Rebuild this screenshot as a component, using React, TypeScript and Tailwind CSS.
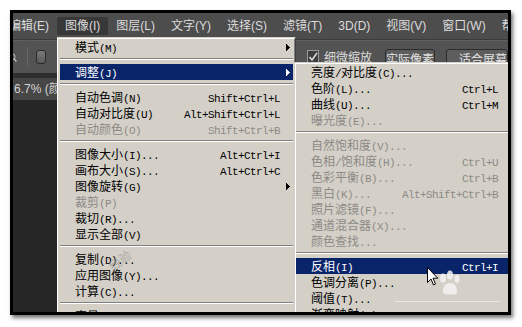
import React from "react";

const CJK_RE = /([\u2E80-\u9FFF\u3000-\u303F\uFF00-\uFFEF]+)/;

function MenuText({ s }: { s: string }) {
  const parts = s.split(CJK_RE).filter((p) => p.length > 0);
  return (
    <>
      {parts.map((p, i) =>
        CJK_RE.test(p) ? (
          <span key={i} className="font-['Noto_Sans_CJK_SC',sans-serif] text-[12px]">
            {p}
          </span>
        ) : (
          <span key={i} className="font-['Liberation_Mono',monospace] text-[11px] tracking-[-0.6px]">
            {p}
          </span>
        )
      )}
    </>
  );
}

type Row = { t: string; k?: string; d?: boolean; h?: boolean; a?: boolean };
type Entry = Row | null;

function Arrow({ white }: { white?: boolean }) {
  const c = white ? "#ffffff" : "#000000";
  return (
    <svg width="4" height="7" viewBox="0 0 4 7" shapeRendering="crispEdges">
      <rect x="0" y="0" width="1" height="7" fill={c} />
      <rect x="1" y="1" width="1" height="5" fill={c} />
      <rect x="2" y="2" width="1" height="3" fill={c} />
      <rect x="3" y="3" width="1" height="1" fill={c} />
    </svg>
  );
}

function MenuRow({ r }: { r: Row }) {
  const color = r.h ? "bg-[#0a246a] text-white" : r.d ? "text-[#8c8a86]" : "text-black";
  return (
    <div className={`flex items-center h-[16px] leading-[16px] pl-[15px] pr-[3px] whitespace-nowrap ${color}`}>
      <div className="flex-1">
        <MenuText s={r.t} />
      </div>
      {r.k ? (
        <div>
          <MenuText s={r.k} />
        </div>
      ) : null}
      <div className="w-[10px] flex justify-end items-center">{r.a ? <Arrow white={r.h} /> : null}</div>
    </div>
  );
}

function Separator() {
  return (
    <div className="h-[9px] pt-[3px]">
      <div className="h-px bg-[#808080]" />
      <div className="h-px bg-white" />
    </div>
  );
}

function MenuList({ entries }: { entries: Entry[] }) {
  return (
    <>
      {entries.map((e, i) => (e ? <MenuRow key={i} r={e} /> : <Separator key={i} />))}
    </>
  );
}

const mainEntries: Entry[] = [
  { t: "模式(M)", a: true },
  null,
  { t: "调整(J)", a: true, h: true },
  null,
  { t: "自动色调(N)", k: "Shift+Ctrl+L" },
  { t: "自动对比度(U)", k: "Alt+Shift+Ctrl+L" },
  { t: "自动颜色(O)", k: "Shift+Ctrl+B", d: true },
  null,
  { t: "图像大小(I)...", k: "Alt+Ctrl+I" },
  { t: "画布大小(S)...", k: "Alt+Ctrl+C" },
  { t: "图像旋转(G)", a: true },
  { t: "裁剪(P)", d: true },
  { t: "裁切(R)..." },
  { t: "显示全部(V)" },
  null,
  { t: "复制(D)..." },
  { t: "应用图像(Y)..." },
  { t: "计算(C)..." },
  null,
  { t: "变量(B)", a: true },
  { t: "应用数据组(L)...", d: true },
];

const subEntries: Entry[] = [
  { t: "亮度/对比度(C)..." },
  { t: "色阶(L)...", k: "Ctrl+L" },
  { t: "曲线(U)...", k: "Ctrl+M" },
  { t: "曝光度(E)...", d: true },
  null,
  { t: "自然饱和度(V)...", d: true },
  { t: "色相/饱和度(H)...", k: "Ctrl+U", d: true },
  { t: "色彩平衡(B)...", k: "Ctrl+B", d: true },
  { t: "黑白(K)...", k: "Alt+Shift+Ctrl+B", d: true },
  { t: "照片滤镜(F)...", d: true },
  { t: "通道混合器(X)...", d: true },
  { t: "颜色查找...", d: true },
  null,
  { t: "反相(I)", k: "Ctrl+I", h: true },
  { t: "色调分离(P)..." },
  { t: "阈值(T)..." },
  { t: "渐变映射(G)..." },
  { t: "可选颜色(S)..." },
];

const barItems = ["编辑(E)", "图像(I)", "图层(L)", "文字(Y)", "选择(S)", "滤镜(T)", "3D(D)", "视图(V)", "窗口(W)", "帮助(H)"];

function MenuBar() {
  return (
    <div className="h-[27px] shrink-0 bg-[#4d4d4d] border-b border-[#3a3a3a] overflow-hidden">
      <div className="flex pt-[4px] ml-[-12px] whitespace-nowrap">
        {barItems.map((m, i) => (
          <div
            key={m}
            className={`px-2 h-[18px] leading-[18px] text-[12px] text-[#dcdcdc] font-['Liberation_Sans','Noto_Sans_CJK_SC',sans-serif] rounded-[2px] ${
              i === 1 ? "bg-[#383838]" : ""
            }`}
          >
            {m}
          </div>
        ))}
      </div>
    </div>
  );
}

function OptionsBar() {
  return (
    <div className="h-[33px] shrink-0 bg-[#535353] border-t border-[#5f5f5f] flex items-start whitespace-nowrap">
      <svg width="10" height="14" viewBox="0 0 10 14" className="mt-[10px] ml-[-2px]">
        <circle cx="2" cy="5" r="4.5" fill="none" stroke="#c8c8c8" strokeWidth="1.5" />
        <path d="M5 8.5 L8.5 12.5" stroke="#c8c8c8" strokeWidth="2" />
      </svg>
      <div className="ml-[10px] mt-[6px] w-px h-[20px] bg-[#3a3a3a] border-r border-[#666]" />
      <div className="ml-[8px] mt-[9px] w-[14px] h-[14px] rounded-[3px] border border-[#2a2a2a] bg-gradient-to-b from-[#7a7a7a] to-[#5a5a5a]" />
      <div className="ml-[261px] mt-[9px] w-[14px] h-[14px] border border-[#9a9a9a] bg-[#3e3e3e] flex items-center justify-center">
        <svg width="10" height="10" viewBox="0 0 10 10">
          <path d="M1.5 5 L4 8 L9 1" fill="none" stroke="#d8d8d8" strokeWidth="1.6" />
        </svg>
      </div>
      <div className="ml-[5px] mt-[8px] text-[12px] leading-[16px] text-[#dcdcdc] font-['Noto_Sans_CJK_SC',sans-serif]">细微缩放</div>
      <div className="ml-[13px] mt-[8px] w-[75px] h-[20px] rounded-[3px] border border-[#2c2c2c] bg-[#5d5d5d] text-center text-[12px] leading-[18px] text-[#e2e2e2] font-['Noto_Sans_CJK_SC',sans-serif]">
        实际像素
      </div>
      <div className="ml-[11px] mt-[8px] w-[75px] h-[20px] rounded-[3px] border border-[#2c2c2c] bg-[#5d5d5d] pl-[12px] text-[12px] leading-[18px] text-[#e2e2e2] font-['Noto_Sans_CJK_SC',sans-serif]">
        适合屏幕
      </div>
    </div>
  );
}

function TabRow() {
  return (
    <div className="h-[27px] shrink-0 bg-[#2e2e2e] flex items-end">
      <div className="h-[22px] w-[200px] bg-[#464646] pl-[1px] text-[12px] leading-[22px] text-[#d4d4d4] font-['Liberation_Sans','Noto_Sans_CJK_SC',sans-serif] whitespace-nowrap">
        6.7% (颜色, RGB/8)
      </div>
    </div>
  );
}

export default function App() {
  return (
    <div className="w-[522px] h-[327px] bg-white pl-[10px] pt-[10px]">
      <div className="w-[501px] h-[305px] border-[3px] border-black shadow-[2px_3px_4px_rgba(0,0,0,0.55)] overflow-hidden bg-[#262626] relative flex flex-col">
        <MenuBar />
        <OptionsBar />
        <TabRow />
        <div className="flex-1 bg-[#262626]" />

        {/* main dropdown */}
        <div className="absolute left-[44px] top-[24px] w-[239px] bg-[#d4d0c8] border border-t-[#d4d0c8] border-l-white border-r-[#404040] border-b-[#404040]">
          <div className="border border-t-white border-l-[#d4d0c8] border-r-[#808080] border-b-[#808080] px-[1px]">
            <MenuList entries={mainEntries} />
          </div>
          <div className="absolute left-[50px] top-[213px] rotate-[-35deg] text-[12px] text-[#9a9894] opacity-70 font-['Noto_Sans_CJK_SC',sans-serif] pointer-events-none">
            经验
          </div>
        </div>

        {/* submenu */}
        <div className="absolute left-[281px] top-[49px] w-[219px] bg-[#d4d0c8] border border-t-[#d4d0c8] border-l-[#d4d0c8] border-r-[#404040] border-b-[#404040]">
          <div className="border border-t-white border-l-white border-r-[#808080] border-b-[#808080]">
            <MenuList entries={subEntries} />
          </div>
        </div>

        {/* watermark line */}
        <div className="absolute left-[382px] top-[288px] w-[105px] h-px bg-[#eeeeee] opacity-80" />

        {/* paw watermark */}
        <svg className="absolute left-[424px] top-[256px]" width="28" height="30" viewBox="0 0 28 30">
          <g fill="#f4f4f4" opacity="0.85">
            <ellipse cx="6" cy="9" rx="3" ry="4.5" />
            <ellipse cx="13" cy="6" rx="3" ry="4.5" />
            <ellipse cx="20" cy="10" rx="2.5" ry="4" />
            <path d="M6 22 C6 16 10 14 13 14 C17 14 20 17 20 22 C20 26 16 26 13 25 C10 26 6 26 6 22 Z" />
          </g>
        </svg>

        {/* mouse cursor */}
        <svg className="absolute left-[414px] top-[254px]" width="12" height="19" viewBox="0 0 12 19">
          <path
            d="M0.5 0.5 L0.5 15.5 L4 12 L6.5 18 L8.5 17 L6 11.2 L10.8 11.2 Z"
            fill="#ffffff"
            stroke="#000000"
            strokeWidth="1"
            strokeLinejoin="miter"
          />
        </svg>
      </div>
    </div>
  );
}
